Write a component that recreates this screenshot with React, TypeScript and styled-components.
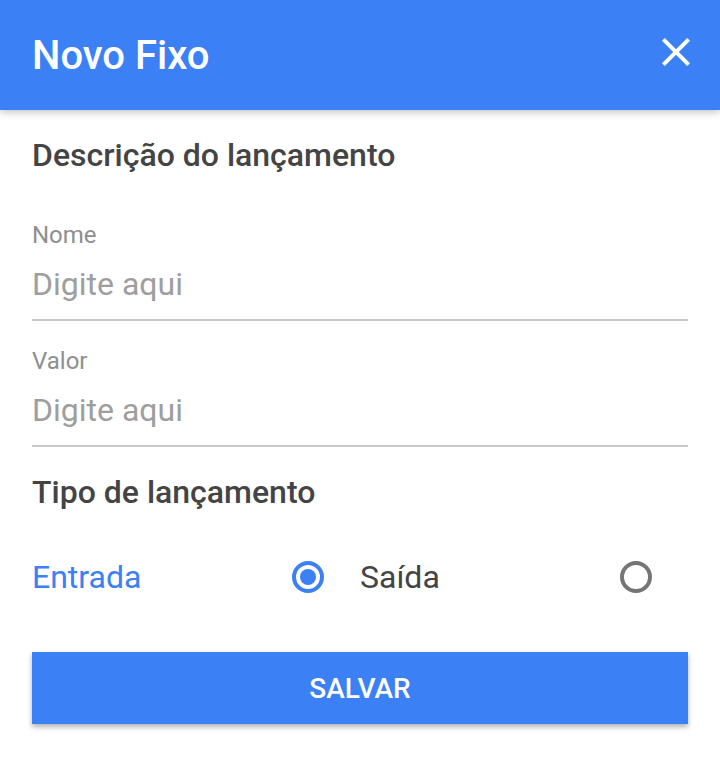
import React, { useState } from 'react';
import styled, { createGlobalStyle } from 'styled-components';

const GlobalStyle = createGlobalStyle`
  body {
    margin: 0;
    background: #ffffff;
    font-family: Roboto, 'Noto Sans', sans-serif;
  }
`;

const BLUE = '#3b80f4';

const Page = styled.div`
  width: 720px;
  min-height: 774px;
  background: #ffffff;
`;

const Header = styled.header`
  height: 110px;
  background: ${BLUE};
  display: flex;
  align-items: center;
  justify-content: space-between;
  padding: 0 20px 0 32px;
  box-sizing: border-box;
  box-shadow: 0 2px 8px rgba(0, 0, 0, 0.25);
  position: relative;
  z-index: 1;
`;

const Title = styled.h1`
  margin: 0;
  font-size: 40px;
  font-weight: 500;
  color: #ffffff;
`;

const CloseButton = styled.button`
  width: 48px;
  height: 48px;
  padding: 0;
  margin-bottom: 6px;
  border: none;
  background: transparent;
  cursor: pointer;
  display: flex;
  align-items: center;
  justify-content: center;
`;

const Content = styled.main`
  padding: 0 32px;
`;

const SectionTitle = styled.h2<{ $top: number }>`
  margin: ${(p) => p.$top}px 0 0;
  font-size: 32px;
  line-height: 38px;
  font-weight: 500;
  color: #444444;
`;

const Field = styled.label`
  display: block;
  padding-top: 26px;
  &:first-of-type {
    padding-top: 47px;
  }
`;

const FieldLabel = styled.span`
  display: block;
  font-size: 24px;
  line-height: 28px;
  color: #8f8f8f;
`;

const Input = styled.input`
  display: block;
  width: 100%;
  box-sizing: content-box;
  margin-top: 15px;
  padding: 0 0 15px;
  height: 40px;
  border: none;
  border-bottom: 2px solid #c8c8c8;
  outline: none;
  font-family: Roboto, sans-serif;
  font-size: 32px;
  color: #333333;
  background: transparent;

  &::placeholder {
    color: #9e9e9e;
  }
`;

const Fields = styled.div``;

const RadioGroup = styled.div`
  display: grid;
  grid-template-columns: 1fr 1fr;
  margin-top: 42px;
`;

const Option = styled.label`
  display: flex;
  align-items: center;
  justify-content: space-between;
  height: 48px;
  padding-right: 28px;
  cursor: pointer;
`;

const OptionText = styled.span<{ $active: boolean }>`
  font-size: 32px;
  color: ${(p) => (p.$active ? BLUE : '#444444')};
`;

const SaveButton = styled.button`
  display: block;
  width: 100%;
  height: 72px;
  margin-top: 51px;
  border: none;
  background: ${BLUE};
  color: #ffffff;
  font-family: Roboto, sans-serif;
  font-size: 28px;
  font-weight: 500;
  box-shadow: 0 3px 5px rgba(0, 0, 0, 0.3);
  cursor: pointer;
`;

const RadioIcon = ({ checked }: { checked: boolean }) => (
  <svg width="48" height="48" viewBox="0 0 48 48">
    <circle
      cx="24"
      cy="24"
      r="14"
      fill="none"
      stroke={checked ? BLUE : '#757575'}
      strokeWidth="4"
    />
    {checked && <circle cx="24" cy="24" r="8" fill={BLUE} />}
  </svg>
);

export default function App() {
  const [tipo, setTipo] = useState<'entrada' | 'saida'>('entrada');

  return (
    <Page>
      <GlobalStyle />
      <Header>
        <Title>Novo Fixo</Title>
        <CloseButton aria-label="Fechar">
          <svg width="48" height="48" viewBox="0 0 24 24">
            <path
              fill="#ffffff"
              d="M19 6.41L17.59 5 12 10.59 6.41 5 5 6.41 10.59 12 5 17.59 6.41 19 12 13.41 17.59 19 19 17.59 13.41 12z"
            />
          </svg>
        </CloseButton>
      </Header>

      <Content>
        <SectionTitle $top={26}>Descrição do lançamento</SectionTitle>

        <Fields>
          <Field>
            <FieldLabel>Nome</FieldLabel>
            <Input placeholder="Digite aqui" />
          </Field>
          <Field>
            <FieldLabel>Valor</FieldLabel>
            <Input placeholder="Digite aqui" />
          </Field>
        </Fields>

        <SectionTitle $top={26}>Tipo de lançamento</SectionTitle>

        <RadioGroup>
          <Option onClick={() => setTipo('entrada')}>
            <OptionText $active={tipo === 'entrada'}>Entrada</OptionText>
            <RadioIcon checked={tipo === 'entrada'} />
          </Option>
          <Option onClick={() => setTipo('saida')}>
            <OptionText $active={tipo === 'saida'}>Saída</OptionText>
            <RadioIcon checked={tipo === 'saida'} />
          </Option>
        </RadioGroup>

        <SaveButton>SALVAR</SaveButton>
      </Content>
    </Page>
  );
}
